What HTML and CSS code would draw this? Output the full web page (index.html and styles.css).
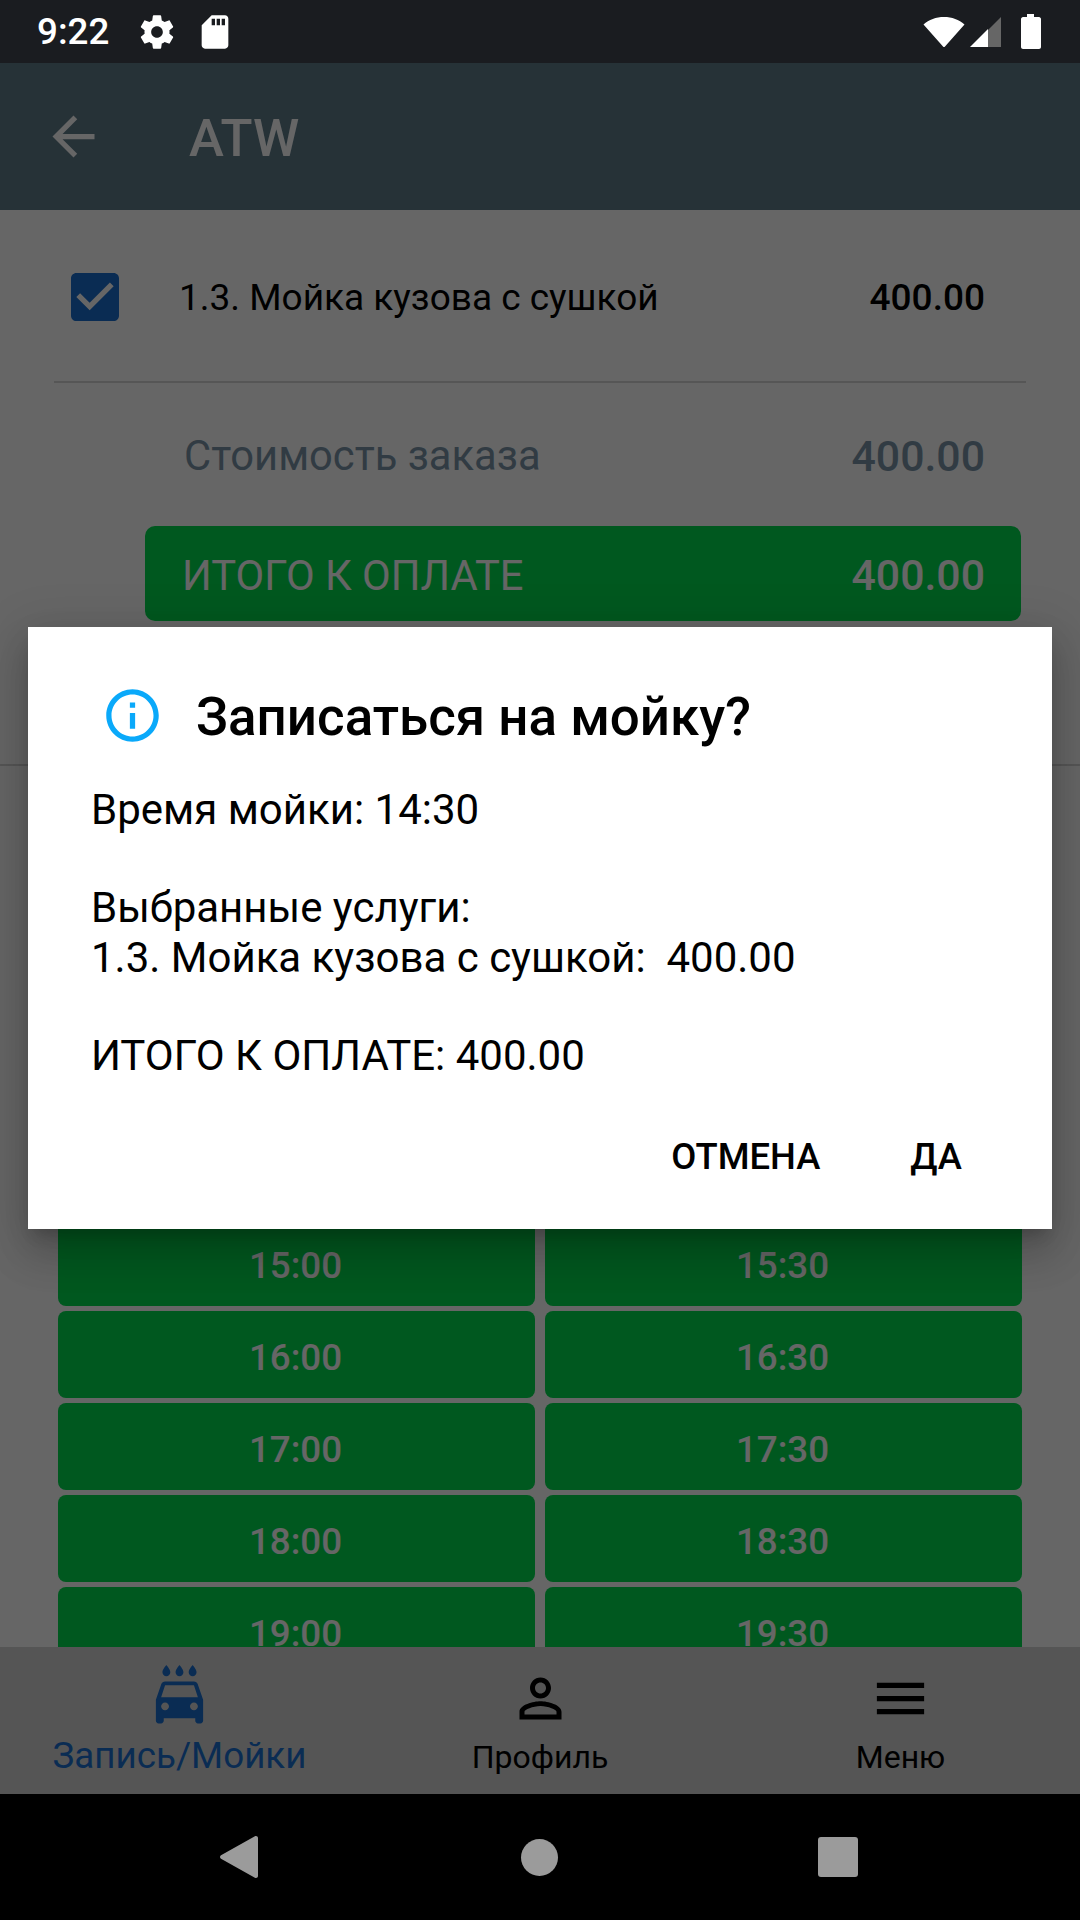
FILE: index.html
```html
<!DOCTYPE html>
<html lang="ru">
<head>
    <meta charset="UTF-8">
    <meta name="viewport" content="width=device-width, initial-scale=1.0">
    <title>ATW</title>
    <link rel="stylesheet" href="styles.css">
</head>
<body>
    <div class="screen">
        <!-- Статус-бар -->
        <div class="status-bar">
            <span class="clock">9:22</span>
            <svg class="status-icon gear" viewBox="0 0 24 24"><path d="M19.43 12.98c.04-.32.07-.64.07-.98s-.03-.66-.07-.98l2.11-1.65c.19-.15.24-.42.12-.64l-2-3.46c-.12-.22-.39-.3-.61-.22l-2.49 1c-.52-.4-1.08-.73-1.69-.98l-.38-2.65C14.46 2.18 14.25 2 14 2h-4c-.25 0-.46.18-.49.42l-.38 2.65c-.61.25-1.17.59-1.69.98l-2.49-1c-.23-.09-.49 0-.61.22l-2 3.46c-.13.22-.07.49.12.64l2.11 1.65c-.04.32-.07.65-.07.98s.03.66.07.98l-2.11 1.65c-.19.15-.24.42-.12.64l2 3.46c.12.22.39.3.61.22l2.49-1c.52.4 1.08.73 1.69.98l.38 2.65c.03.24.24.42.49.42h4c.25 0 .46-.18.49-.42l.38-2.65c.61-.25 1.17-.59 1.69-.98l2.49 1c.23.09.49 0 .61-.22l2-3.46c.12-.22.07-.49-.12-.64l-2.11-1.65zM12 15.5c-1.93 0-3.5-1.57-3.5-3.5s1.57-3.5 3.5-3.5 3.5 1.57 3.5 3.5-1.57 3.5-3.5 3.5z"/></svg>
            <svg class="status-icon" viewBox="0 0 24 24"><path d="M18 2h-8L4.02 8 4 20c0 1.1.9 2 2 2h12c1.1 0 2-.9 2-2V4c0-1.1-.9-2-2-2zm-6 6h-2V4h2v4zm3 0h-2V4h2v4zm3 0h-2V4h2v4z"/></svg>
            <div class="status-right">
                <svg class="wifi" viewBox="0 0 42 32"><path d="M0.5 8.5C6 3.5 13 1 21 1s15 2.5 20.500 7.500L22 30.500c-.6.7-1.400.7-2 0z"/></svg>
                <svg class="signal" viewBox="0 0 32 32"><path fill="#666" d="M18 14L31 1v30H18z"/><path d="M0 31L18 13v18z"/></svg>
                <svg class="battery" viewBox="0 0 20 35"><path d="M6 0h7v3h5c1 0 2 1 2 2v28c0 1-1 2-2 2H2c-1 0-2-1-2-2V5c0-1 1-2 2-2h4z"/></svg>
            </div>
        </div>

        <!-- Шапка -->
        <header class="toolbar">
            <svg class="back-arrow" viewBox="0 0 24 24"><path d="M20 11H7.830l5.590-5.590L12 4l-8 8 8 8 1.410-1.410L7.830 13H20v-2z"/></svg>
            <span class="toolbar-title">ATW</span>
        </header>

        <main class="content">
            <div class="service-row">
                <svg class="checkbox" viewBox="0 0 24 24"><path d="M19 3H5c-1.110 0-2 .9-2 2v14c0 1.100.89 2 2 2h14c1.110 0 2-.9 2-2V5c0-1.100-.89-2-2-2zm-9 14l-5-5 1.410-1.410L10 14.170l7.590-7.590L19 8l-9 9z"/></svg>
                <span class="service-name">1.3. Мойка кузова с сушкой</span>
                <span class="service-price">400.00</span>
            </div>
            <div class="divider"></div>
            <div class="cost-row">
                <span>Стоимость заказа</span>
                <span class="cost-value">400.00</span>
            </div>
            <div class="total-bar">
                <span>ИТОГО К ОПЛАТЕ</span>
                <span class="total-value">400.00</span>
            </div>
            <div class="divider divider-full"></div>
            <div class="time-grid">
                <div class="time-slot">15:00</div>
                <div class="time-slot">15:30</div>
                <div class="time-slot">16:00</div>
                <div class="time-slot">16:30</div>
                <div class="time-slot">17:00</div>
                <div class="time-slot">17:30</div>
                <div class="time-slot">18:00</div>
                <div class="time-slot">18:30</div>
                <div class="time-slot">19:00</div>
                <div class="time-slot">19:30</div>
            </div>
        </main>

        <!-- Нижнее меню -->
        <nav class="bottom-nav">
            <div class="nav-item nav-active">
                <svg viewBox="0 0 24 24"><path d="M17 5c.83 0 1.500-.67 1.500-1.500 0-1-1.500-2.700-1.500-2.700s-1.500 1.700-1.500 2.700c0 .83.67 1.500 1.500 1.500zm-5 0c.83 0 1.500-.67 1.500-1.500 0-1-1.500-2.700-1.500-2.700s-1.500 1.700-1.500 2.700c0 .83.67 1.500 1.500 1.500zM7 5c.83 0 1.500-.67 1.500-1.500C8.500 2.500 7 .8 7 .8S5.500 2.500 5.500 3.500C5.500 4.330 6.170 5 7 5zm11.920 3.010C18.720 7.420 18.160 7 17.500 7h-11c-.66 0-1.210.42-1.420 1.010L3 14v8c0 .55.45 1 1 1h1c.55 0 1-.45 1-1v-1h12v1c0 .55.45 1 1 1h1c.55 0 1-.45 1-1v-8l-2.080-5.990zM6.500 18c-.83 0-1.500-.67-1.500-1.500S5.670 15 6.500 15s1.500.67 1.500 1.500S7.330 18 6.500 18zm11 0c-.83 0-1.500-.67-1.500-1.500s.67-1.500 1.500-1.500 1.500.67 1.500 1.500-.67 1.500-1.500 1.500zM5 13l1.500-4.500h11L19 13H5z"/></svg>
                <span>Запись/Мойки</span>
            </div>
            <div class="nav-item">
                <svg viewBox="0 0 24 24"><path d="M12 5.900c1.160 0 2.100.94 2.100 2.100s-.94 2.100-2.100 2.100S9.900 9.160 9.900 8s.94-2.100 2.100-2.100m0 9c2.970 0 6.100 1.460 6.100 2.100v1.100H5.900V17c0-.64 3.130-2.100 6.100-2.100M12 4C9.790 4 8 5.790 8 8s1.790 4 4 4 4-1.790 4-4-1.790-4-4-4zm0 9c-2.670 0-8 1.340-8 4v3h16v-3c0-2.660-5.330-4-8-4z"/></svg>
                <span>Профиль</span>
            </div>
            <div class="nav-item">
                <svg viewBox="0 0 24 24"><path d="M3 18h18v-2H3v2zm0-5h18v-2H3v2zm0-7v2h18V6H3z"/></svg>
                <span>Меню</span>
            </div>
        </nav>

        <!-- Системные кнопки -->
        <div class="system-nav">
            <svg class="sys-back" viewBox="0 0 38 42"><path d="M36 0c1 0 2 .8 2 2v38c0 1.200-1 2-2 2-.4 0-.8-.1-1.100-.3L1 22.700c-1.300-.8-1.300-2.600 0-3.400L34.900.3C35.200.1 35.600 0 36 0z"/></svg>
            <span class="sys-home"></span>
            <span class="sys-recent"></span>
        </div>

        <!-- Затемнение и диалог -->
        <div class="scrim">
            <div class="dialog">
                <div class="dialog-head">
                    <svg class="info-icon" viewBox="0 0 24 24"><path d="M11 7h2v2h-2zm0 4h2v6h-2zm1-9C6.480 2 2 6.480 2 12s4.480 10 10 10 10-4.480 10-10S17.520 2 12 2zm0 18c-4.410 0-8-3.590-8-8s3.590-8 8-8 8 3.590 8 8-3.590 8-8 8z"/></svg>
                    <h2 class="dialog-title">Записаться на мойку?</h2>
                </div>
                <div class="dialog-body">Время мойки: 14:30

Выбранные услуги:
1.3. Мойка кузова с сушкой:  400.00

ИТОГО К ОПЛАТЕ: 400.00</div>
                <div class="dialog-buttons">
                    <span class="dialog-button">ОТМЕНА</span>
                    <span class="dialog-button">ДА</span>
                </div>
            </div>
        </div>
    </div>
</body>
</html>
```

FILE: styles.css
```css
html, body {
    margin: 0;
    padding: 0;
}
body {
    font-family: Roboto, "Liberation Sans", sans-serif;
    background-color: #000;
}
.screen {
    position: relative;
    width: 1080px;
    height: 1920px;
    display: flex;
    flex-direction: column;
    overflow: hidden;
    background-color: #fff;
}

/* статус-бар */
.status-bar {
    height: 63px;
    flex: none;
    display: flex;
    align-items: center;
    padding: 0 37px;
    box-sizing: border-box;
    background-color: #1a1c20;
    color: #fff;
    position: relative;
    z-index: 2;
}
.status-bar svg {
    fill: #fff;
    display: block;
}
.clock {
    font-size: 36.75px;
    font-weight: 500;
    width: 100px;
}
.status-icon {
    width: 40px;
    height: 40px;
}
.gear {
    margin-right: 18px;
}
.status-right {
    margin-left: auto;
    display: flex;
    align-items: center;
    margin-right: 2px;
}
.wifi {
    width: 42px;
    height: 32px;
    margin-right: 5px;
}
.signal {
    width: 32px;
    height: 32px;
    margin-right: 19px;
}
.battery {
    width: 20px;
    height: 35px;
}

/* шапка */
.toolbar {
    height: 147px;
    flex: none;
    display: flex;
    align-items: center;
    background-color: #607d8b;
    color: #fff;
    padding-left: 42px;
}
.back-arrow {
    width: 63px;
    height: 63px;
    fill: #fff;
}
.toolbar-title {
    margin-left: 84px;
    padding-top: 2px;
    font-size: 52.5px;
    font-weight: 500;
}

/* основной блок */
.content {
    flex: 1;
    min-height: 0;
    overflow: hidden;
}
.service-row {
    height: 171px;
    box-sizing: border-box;
    padding: 3px 95px 0 63px;
    display: flex;
    align-items: center;
    font-size: 37px;
}
.checkbox {
    width: 64px;
    height: 64px;
    fill: #1a6fd0;
    margin-right: 52px;
}
.service-price {
    margin-left: auto;
    font-weight: 500;
}
.divider {
    height: 2px;
    margin: 0 54px;
    background-color: #d8d8d8;
}
.divider-full {
    margin: 143px 0 0;
}
.cost-row {
    height: 143px;
    box-sizing: border-box;
    padding: 2px 95px 0 184px;
    display: flex;
    align-items: center;
    justify-content: space-between;
    font-size: 41.7px;
    color: #7a95a8;
}
.cost-value {
    font-weight: 500;
    font-size: 42.8px;
}
.total-bar {
    height: 95px;
    box-sizing: border-box;
    margin: 0 59px 0 145px;
    padding: 3px 36px 0 37px;
    display: flex;
    align-items: center;
    justify-content: space-between;
    border-radius: 10px;
    background-color: #00dc4e;
    color: #fff;
    font-size: 41.7px;
}
.total-value {
    font-weight: 500;
    font-size: 42.8px;
}
.time-grid {
    display: grid;
    grid-template-columns: 477px 477px;
    grid-auto-rows: 87px;
    gap: 5px 10px;
    padding: 453px 0 0 58px;
}
.time-slot {
    display: flex;
    align-items: center;
    justify-content: center;
    box-sizing: border-box;
    padding: 6px 2px 0 0;
    border-radius: 8px;
    background-color: #00dc4e;
    color: #fff;
    font-size: 36.75px;
    font-weight: 500;
}

/* нижнее меню */
.bottom-nav {
    height: 147px;
    flex: none;
    display: grid;
    grid-template-columns: 359px 362px 359px;
    background-color: #d5d5d5;
}
.nav-item {
    display: flex;
    flex-direction: column;
    align-items: center;
    padding-top: 20px;
    color: #000;
    font-size: 32px;
}
.nav-item svg {
    width: 63px;
    height: 63px;
    fill: #000;
    margin-bottom: 8px;
}
.nav-active {
    padding-top: 16px;
    color: #1a6fd0;
    font-size: 36.75px;
}
.nav-active svg {
    fill: #1a6fd0;
    margin-bottom: 8px;
}

/* системные кнопки */
.system-nav {
    height: 126px;
    flex: none;
    background-color: #000;
    display: flex;
    align-items: center;
    position: relative;
    z-index: 2;
}
.sys-back {
    width: 38px;
    height: 42px;
    fill: #9b9b9b;
    margin-left: 220px;
}
.sys-home {
    width: 37px;
    height: 37px;
    border-radius: 50%;
    background-color: #9b9b9b;
    margin-left: 263px;
}
.sys-recent {
    width: 40px;
    height: 40px;
    border-radius: 3px;
    background-color: #9b9b9b;
    margin-left: 260px;
}

/* затемнение и диалог */
.scrim {
    position: absolute;
    top: 63px;
    left: 0;
    right: 0;
    bottom: 126px;
    background-color: rgba(0, 0, 0, 0.6);
    display: flex;
    align-items: center;
    justify-content: center;
}
.dialog {
    width: 1024px;
    margin-bottom: 1px;
    background-color: #fff;
    color: #000;
    box-shadow: 0 11px 15px -7px rgba(0, 0, 0, 0.2), 0 24px 38px 3px rgba(0, 0, 0, 0.14), 0 9px 46px 8px rgba(0, 0, 0, 0.12);
}
.dialog-head {
    display: flex;
    align-items: center;
    height: 63px;
    padding: 57px 0 0 73px;
}
.info-icon {
    width: 63px;
    height: 63px;
    fill: #0aa9fa;
}
.dialog-title {
    margin: 0 0 0 32px;
    padding-top: 4px;
    font-size: 52.9px;
    font-weight: 500;
}
.dialog-body {
    padding: 38px 63px 0;
    font-size: 42px;
    line-height: 49.2px;
    white-space: pre-wrap;
}
.dialog-buttons {
    height: 145.800px;
    margin-top: 3px;
    display: flex;
    align-items: center;
    justify-content: flex-end;
    gap: 90px;
    padding-right: 90px;
    font-size: 36.4px;
    font-weight: 500;
}
```
